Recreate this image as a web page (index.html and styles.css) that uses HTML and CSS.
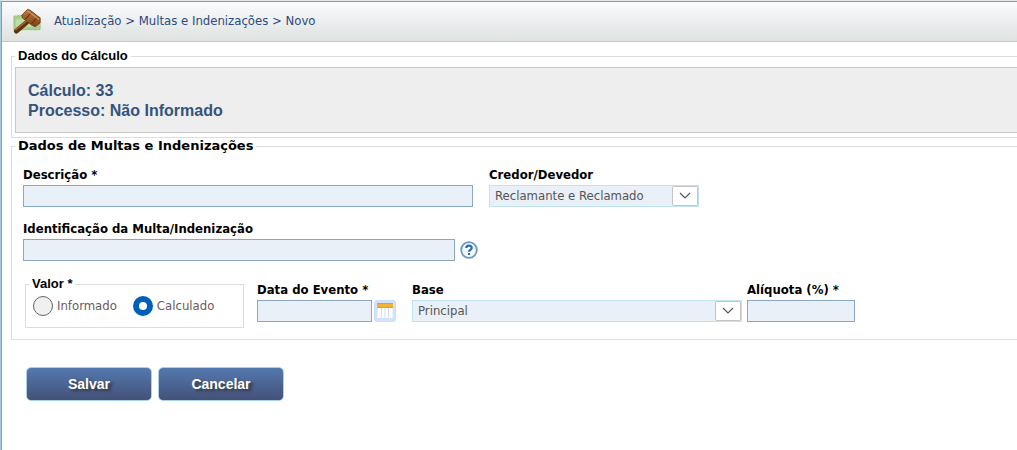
FILE: index.html
```html
<!DOCTYPE html>
<html lang="pt-BR">
<head>
<meta charset="utf-8">
<title>Multas e Indenizações</title>
<link rel="stylesheet" href="styles.css">
</head>
<body>
<div class="page">
  <header class="topbar">
    <svg class="gavel" viewBox="0 0 30 26" aria-hidden="true">
      <defs>
        <linearGradient id="wood" x1="0" y1="0" x2="0" y2="1"><stop offset="0" stop-color="#bd7a40"/><stop offset="1" stop-color="#7c3f14"/></linearGradient>
      </defs>
      <path d="M1 8l13-1 14 2v13H1z" fill="#a9cf8d" stroke="#9bc285"/>
      <path d="M3 11h22v8H3z" fill="#bddca6"/>
      <path d="M3.500 23.500L17 12" stroke="#61300f" stroke-width="5" stroke-linecap="round"/>
      <path d="M3 22L17 10.500" stroke="#a8642c" stroke-width="1.500" stroke-linecap="round"/>
      <path d="M9 7L15 1L18 2L28 10L28 15L23 19L19 17L10 10z" fill="url(#wood)" stroke="#7c4219" stroke-linejoin="round"/>
      <path d="M13 11L19 4M19 16L25 9" stroke="#663410" stroke-width="1.200"/>
      <path d="M15 2.500L27 11.500" stroke="#d99b66" stroke-width="1.200"/>
    </svg>
    <nav class="crumbs">Atualização &gt; Multas e Indenizações &gt; Novo</nav>
  </header>
  <form class="content">
    <fieldset class="group group-calc">
      <legend>Dados do Cálculo</legend>
      <div class="summary">
        <div>Cálculo: 33</div>
        <div>Processo: Não Informado</div>
      </div>
    </fieldset>
    <fieldset class="group group-fines">
      <legend class="legend-heavy">Dados de Multas e Indenizações</legend>
      <div class="row row-wide">
        <div class="field">
          <label for="descricao">Descrição *</label>
          <input class="text w-desc" id="descricao" type="text">
        </div>
        <div class="field">
          <label for="credor">Credor/Devedor</label>
          <div class="select w-credor">
            <select id="credor"><option>Reclamante e Reclamado</option></select>
            <span class="arrow"><svg viewBox="0 0 12 8" aria-hidden="true"><path d="M1 1l5 5 5-5"/></svg></span>
          </div>
        </div>
      </div>
      <div class="row">
        <div class="field">
          <label for="ident">Identificação da Multa/Indenização</label>
          <div class="inline">
            <input class="text w-ident" id="ident" type="text">
            <button class="icon-btn" type="button" aria-label="Ajuda">
              <svg class="help" viewBox="0 0 18 18" aria-hidden="true"><circle cx="9" cy="9" r="7.800" fill="#f3f8fc" stroke="#6d98bd" stroke-width="1.800"/><path d="M6.300 7C6.300 3.900 11.700 3.900 11.700 6.900C11.700 8.800 9 8.800 9 10.700" fill="none" stroke="#2d6a9f" stroke-width="2.200"/><path d="M8 12h2v2H8z" fill="#2d6a9f"/></svg>
            </button>
          </div>
        </div>
      </div>
      <div class="row row-values">
        <fieldset class="valor">
          <legend>Valor *</legend>
          <label class="choice"><input type="radio" name="valor">Informado</label>
          <label class="choice"><input type="radio" name="valor" checked>Calculado</label>
        </fieldset>
        <div class="field field-date">
          <label for="data">Data do Evento *</label>
          <div class="inline inline-tight">
            <input class="text w-date" id="data" type="text">
            <button class="icon-btn" type="button" aria-label="Calendário">
              <svg class="calendar" viewBox="0 0 22 22" aria-hidden="true"><rect x=".5" y=".5" width="21" height="21" rx="2.500" fill="#d3e3fb" stroke="#c9dcf8"/><path d="M3 3h16v15H3z" fill="#e8f0fb"/><path d="M4 8h14v10H4z" fill="#fff"/><path d="M7.500 8v10M11 8v10M14.500 8v10" stroke="#d3deef"/><path d="M3 3h16v5H3z" fill="#f3b233"/><path d="M3 3.500h16M3 7.500h16" stroke="#dfa02a"/></svg>
            </button>
          </div>
        </div>
        <div class="field field-base">
          <label for="base">Base</label>
          <div class="select w-base">
            <select id="base"><option>Principal</option></select>
            <span class="arrow"><svg viewBox="0 0 12 8" aria-hidden="true"><path d="M1 1l5 5 5-5"/></svg></span>
          </div>
        </div>
        <div class="field">
          <label for="aliquota">Alíquota (%) *</label>
          <input class="text w-rate" id="aliquota" type="text">
        </div>
      </div>
    </fieldset>
    <div class="actions">
      <button class="action" type="button">Salvar</button>
      <button class="action" type="button">Cancelar</button>
    </div>
  </form>
</div>
</body>
</html>
```
FILE: styles.css
```css
* { box-sizing: border-box; }
body {
  margin: 0;
  background: #fff;
  color: #000;
  font: 13px/16px "DejaVu Sans Condensed", "DejaVu Sans", sans-serif;
}
.page {
  min-height: 100vh;
  border-left: 1px solid #a5ccd8;
  border-top: 1px solid #e4e8ea;
  box-shadow: inset 1px 0 #929ba0;
  padding-left: 1px;
}
.topbar {
  display: flex;
  align-items: center;
  gap: 12px;
  height: 41px;
  padding: 0 11px 2px;
  border-top: 1px solid #92979a;
  border-bottom: 1px solid #c6c9ca;
  background: linear-gradient(#fafbfd, #dfe2e1);
}
.gavel { width: 29px; height: 26px; }
.crumbs { color: #2b4a7d; }
.content { padding: 6px 0 0 9px; }
fieldset { margin: 0; min-width: 0; border: 1px solid #ddd; }
legend { padding: 0 3px; font: bold 13px/16px "Liberation Sans", Arial, sans-serif; }
.group { border-right: 0; }
.group-calc { padding: 3px 0 4px 3px; }
.summary {
  padding: 13px 12px 11px;
  border: 1px solid #c8c8c8;
  border-right: 0;
  background: #eee;
  color: #34537f;
  font: bold 16px/20px "Liberation Sans", Arial, sans-serif;
}
.group-fines { padding: 13px 11px 11px; }
.legend-heavy {
  margin-left: -8px;
  font: bold 13px/16px "DejaVu Sans", sans-serif;
}
.row { display: flex; align-items: flex-end; margin-bottom: 14px; }
.row-wide { gap: 16px; }
.field { display: flex; flex-direction: column; gap: 2px; }
.field > label { font-weight: bold; }
.inline { display: flex; align-items: center; gap: 5px; }
.inline-tight { gap: 2px; }
.text {
  height: 22px;
  padding: 0 5px;
  border: 1px solid #8aa8c6;
  border-radius: 0;
  background: #e9f0f8;
  font: inherit;
  color: #555;
}
.select { position: relative; }
.select select {
  appearance: none;
  width: 100%;
  height: 22px;
  padding: 0 28px 0 5px;
  border: 1px solid #bfe3ef;
  border-radius: 0;
  background: #e9f0f8;
  color: #555;
  font: inherit;
  display: block;
}
.arrow {
  position: absolute;
  right: 1px;
  top: 1px;
  width: 26px;
  height: 20px;
  display: grid;
  place-items: center;
  border: 1px solid #c4c4c4;
  border-radius: 2px;
  background: #fff;
  pointer-events: none;
}
.arrow svg { width: 12px; height: 8px; fill: none; stroke: #555; stroke-width: 1.2; }
.w-desc { width: 450px; }
.w-credor { width: 210px; }
.w-ident { width: 432px; }
.w-date { width: 115px; }
.w-base { width: 330px; }
.w-rate { width: 108px; }
.icon-btn { display: flex; padding: 0; border: 0; background: none; }
.help { width: 18px; height: 18px; }
.calendar { width: 22px; height: 22px; }
.valor {
  display: flex;
  gap: 16px;
  width: 219px;
  margin: 0 13px 0 2px;
  padding: 4px 7px 11px;
}
.valor legend { margin-left: -4px; }
.row-values { align-items: flex-start; margin: 15px 0 0; }
.row-values .field { padding-top: 6px; }
.choice { display: flex; align-items: center; gap: 4px; color: #6d5a5a; }
.choice input {
  appearance: none;
  width: 20px;
  height: 20px;
  margin: 0;
  border: 1px solid #666;
  border-radius: 50%;
  background: #f0f0f0;
}
.choice input:checked { border: 6px solid #005fb8; background: #fff; }
.field-date { margin-right: 16px; }
.field-base { margin-right: 5px; }
.actions { display: flex; gap: 6px; padding: 27px 0 0 15px; }
.action {
  width: 126px;
  height: 34px;
  padding: 0;
  border: 1px solid #a9d3e4;
  border-radius: 5px;
  background: linear-gradient(#5479af, #435178);
  color: #fff;
  font: bold 14px/16px "Liberation Sans", Arial, sans-serif;
  text-shadow: 3px 2px 3px #333;
}
```
